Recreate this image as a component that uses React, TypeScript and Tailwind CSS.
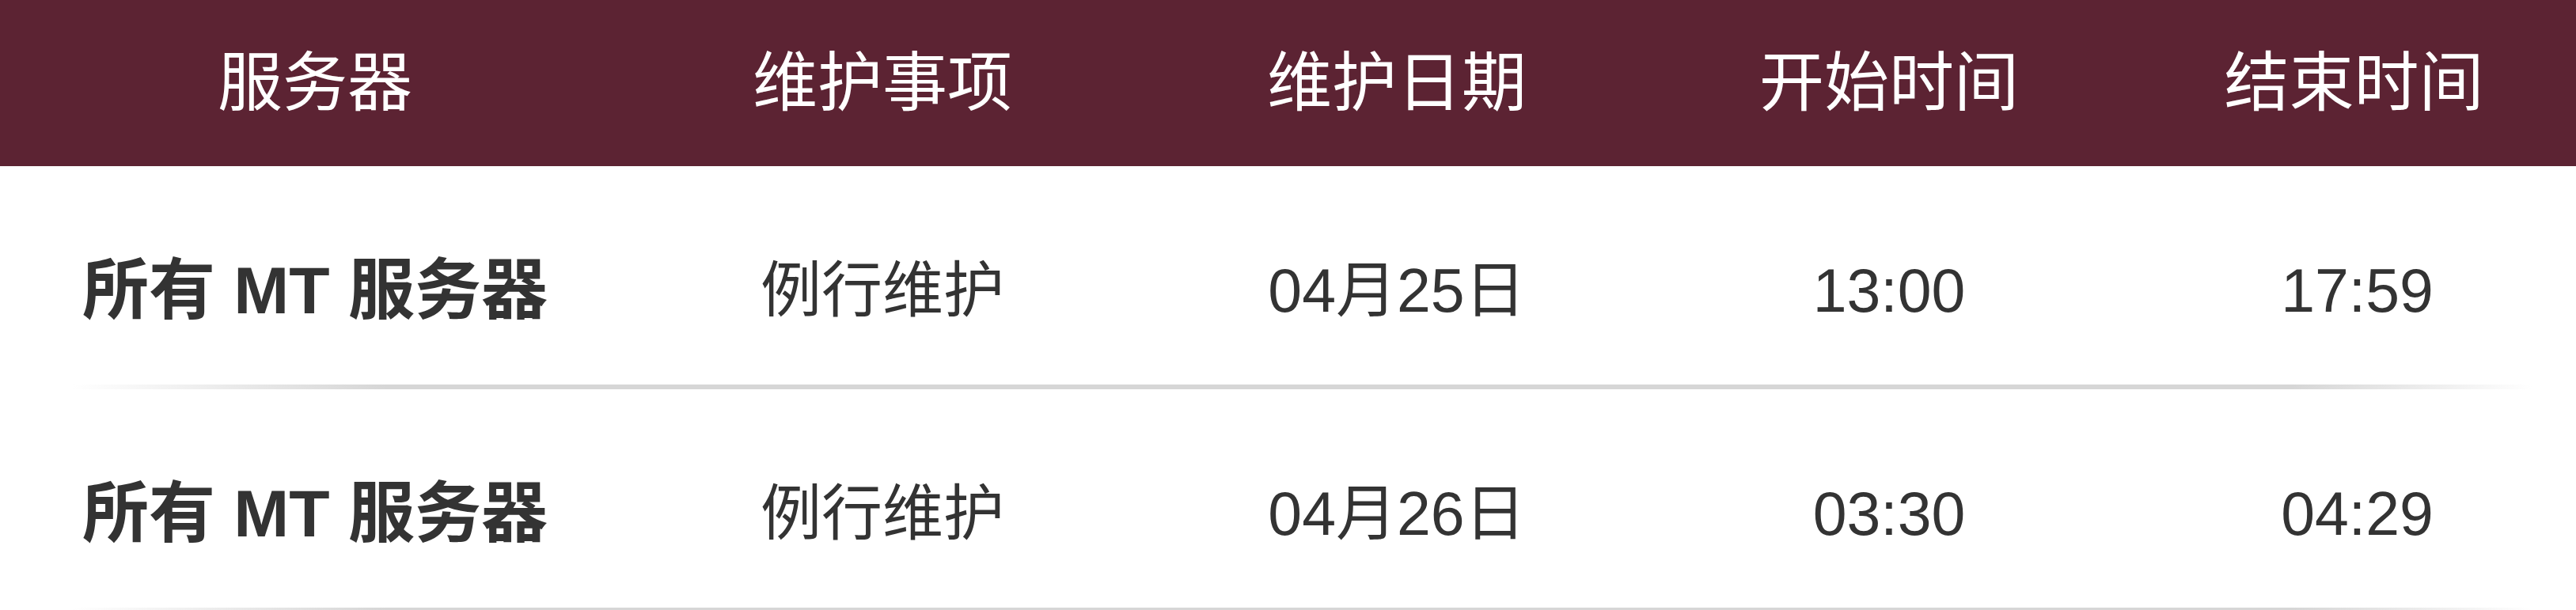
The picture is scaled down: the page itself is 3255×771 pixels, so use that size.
const headers = ["服务器", "维护事项", "维护日期", "开始时间", "结束时间"]

const rows = [
  { server: "所有 MT 服务器", item: "例行维护", date: "04月25日", start: "13:00", end: "17:59" },
  { server: "所有 MT 服务器", item: "例行维护", date: "04月26日", start: "03:30", end: "04:29" },
]

const cols = "grid grid-cols-[796px_638px_662px_582px_577px]"

function Divider() {
  return (
    <div className="h-[6px] w-full bg-[linear-gradient(90deg,transparent_2.8%,#d6d6d6_15%,#d6d6d6_89%,transparent_98.3%)]" />
  )
}

export default function App() {
  return (
    <div className="w-[3255px] bg-white font-[family-name:'Liberation_Sans','Noto_Sans_CJK_SC',sans-serif] text-[#333333]">
      <div className={`${cols} h-[210px] items-center bg-[#5c2333] text-[82px] leading-none text-white`}>
        {headers.map((h, i) => (
          <div key={h} className={`flex justify-center ${i === 4 ? "pl-[16px]" : ""}`}>
            {h}
          </div>
        ))}
      </div>

      {rows.map((r) => (
        <div key={r.date}>
          <div className={`${cols} h-[276px] items-center pt-[38px] text-[77px] leading-none`}>
            <div className="flex justify-center text-[84px] font-bold">{r.server}</div>
            <div className="flex justify-center">{r.item}</div>
            <div className="flex justify-center">{r.date}</div>
            <div className="flex justify-center">{r.start}</div>
            <div className="flex justify-center pl-[24px]">{r.end}</div>
          </div>
          <Divider />
        </div>
      ))}
    </div>
  )
}
